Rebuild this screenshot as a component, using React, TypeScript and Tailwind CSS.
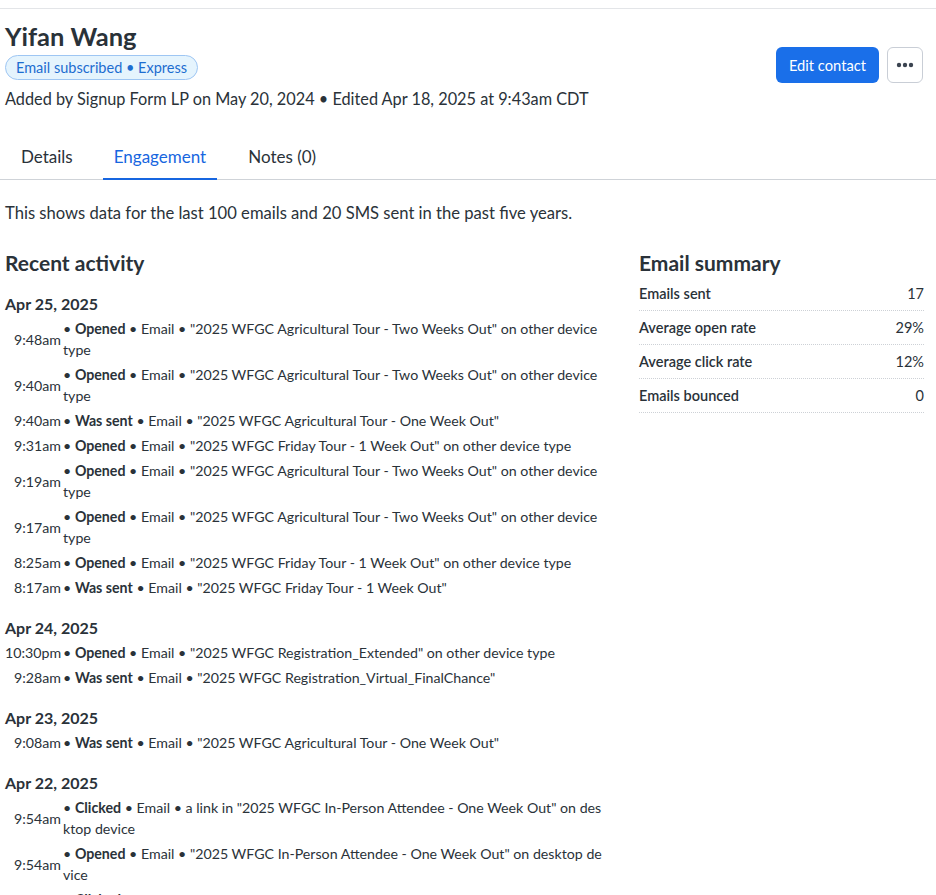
import React from "react";

type Row = { time: string; action: string; rest: string };
type Group = { date: string; rows: Row[] };

const groups: Group[] = [
  {
    date: "Apr 25, 2025",
    rows: [
      { time: "9:48am", action: "Opened", rest: ' • Email • "2025 WFGC Agricultural Tour - Two Weeks Out" on other device type' },
      { time: "9:40am", action: "Opened", rest: ' • Email • "2025 WFGC Agricultural Tour - Two Weeks Out" on other device type' },
      { time: "9:40am", action: "Was sent", rest: ' • Email • "2025 WFGC Agricultural Tour - One Week Out"' },
      { time: "9:31am", action: "Opened", rest: ' • Email • "2025 WFGC Friday Tour - 1 Week Out" on other device type' },
      { time: "9:19am", action: "Opened", rest: ' • Email • "2025 WFGC Agricultural Tour - Two Weeks Out" on other device type' },
      { time: "9:17am", action: "Opened", rest: ' • Email • "2025 WFGC Agricultural Tour - Two Weeks Out" on other device type' },
      { time: "8:25am", action: "Opened", rest: ' • Email • "2025 WFGC Friday Tour - 1 Week Out" on other device type' },
      { time: "8:17am", action: "Was sent", rest: ' • Email • "2025 WFGC Friday Tour - 1 Week Out"' },
    ],
  },
  {
    date: "Apr 24, 2025",
    rows: [
      { time: "10:30pm", action: "Opened", rest: ' • Email • "2025 WFGC Registration_Extended" on other device type' },
      { time: "9:28am", action: "Was sent", rest: ' • Email • "2025 WFGC Registration_Virtual_FinalChance"' },
    ],
  },
  {
    date: "Apr 23, 2025",
    rows: [{ time: "9:08am", action: "Was sent", rest: ' • Email • "2025 WFGC Agricultural Tour - One Week Out"' }],
  },
  {
    date: "Apr 22, 2025",
    rows: [
      { time: "9:54am", action: "Clicked", rest: ' • Email • a link in "2025 WFGC In-Person Attendee - One Week Out" on desktop device' },
      { time: "9:54am", action: "Opened", rest: ' • Email • "2025 WFGC In-Person Attendee - One Week Out" on desktop device' },
      { time: "9:54am", action: "Clicked", rest: ' • Email • a link in "2025 WFGC In-Person Attendee - One Week Out" on desktop device' },
    ],
  },
];

const summary = [
  ["Emails sent", "17"],
  ["Average open rate", "29%"],
  ["Average click rate", "12%"],
  ["Emails bounced", "0"],
];

export default function App() {
  return (
    <div
      className="h-[895px] overflow-hidden bg-white text-[#2a3239]"
      style={{ fontFamily: "Lato, 'Noto Sans', sans-serif" }}
    >
      <div className="h-[9px] border-b border-[#e3e5e8]" />
      <div className="flex items-start justify-between pl-[5px] pr-[13px]">
        <div className="pt-[12px]">
          <h1 className="text-[25.5px] font-bold leading-[30px]">Yifan Wang</h1>
          <div className="mt-[4px] inline-flex h-[25px] items-center rounded-full border border-[#9ec6f3] bg-[#e5f4fd] px-[10px] text-[14.5px] text-[#1d6dd0]">
            Email subscribed • Express
          </div>
          <div className="mt-[8px] text-[16.3px] leading-[22px]">
            Added by Signup Form LP on May 20, 2024 • Edited Apr 18, 2025 at 9:43am CDT
          </div>
        </div>
        <div className="mt-[38px] flex items-center gap-[8px]">
          <button className="h-[36px] rounded-[6px] bg-[#1a6fe9] px-[13px] text-[14.7px] text-white">Edit contact</button>
          <button className="flex h-[36px] w-[36px] items-center justify-center rounded-[6px] border border-[#c9ced6] bg-white">
            <svg width="18" height="6" viewBox="0 0 18 6">
              <circle cx="3" cy="3" r="2.2" fill="#3b4450" />
              <circle cx="9" cy="3" r="2.2" fill="#3b4450" />
              <circle cx="15" cy="3" r="2.2" fill="#3b4450" />
            </svg>
          </button>
        </div>
      </div>

      <div className="mt-[31px] flex border-b border-[#cfd3d8] pl-[5px] text-[17px] leading-[24px]">
        <div className="px-[16px] pb-[10px] pt-[4px]">Details</div>
        <div className="-mb-px ml-[14px] border-b-2 border-[#1766e0] px-[11px] pb-[9px] pt-[4px] text-[#1766e0]">
          Engagement
        </div>
        <div className="ml-[20px] px-[11px] pb-[10px] pt-[4px]">Notes (0)</div>
      </div>

      <p className="mt-[22px] pl-[5px] text-[16.6px] leading-[22px]">
        This shows data for the last 100 emails and 20 SMS sent in the past five years.
      </p>

      <div className="mt-[26px] flex pl-[5px] pr-[12px]">
        <div className="w-[600px]">
          <h2 className="text-[21px] font-bold leading-[26px]">Recent activity</h2>
          {groups.map((g, gi) => (
            <div key={g.date} className={gi === 0 ? "mt-[16px]" : "mt-[18px]"}>
              <h3 className="mb-[2px] text-[16px] font-bold leading-[24px]">{g.date}</h3>
              {g.rows.map((r, i) => (
                <div key={i} className="mb-[4px] flex items-center text-[14.2px] leading-[21px]">
                  <div className="w-[56px] shrink-0 text-right">{r.time}</div>
                  <div className="ml-[2px] break-all">
                    <span> • </span>
                    <span className="font-bold">{r.action}</span>
                    {r.rest}
                  </div>
                </div>
              ))}
            </div>
          ))}
        </div>
        <div className="ml-[34px] flex-1">
          <h2 className="text-[21px] font-bold leading-[26px]">Email summary</h2>
          <div className="mt-[1px]">
            {summary.map(([k, v]) => (
              <div
                key={k}
                className="flex h-[34px] items-center justify-between border-b border-dotted border-[#cdd1d6] text-[14.5px]"
              >
                <span className="font-semibold">{k}</span>
                <span>{v}</span>
              </div>
            ))}
          </div>
        </div>
      </div>
    </div>
  );
}
